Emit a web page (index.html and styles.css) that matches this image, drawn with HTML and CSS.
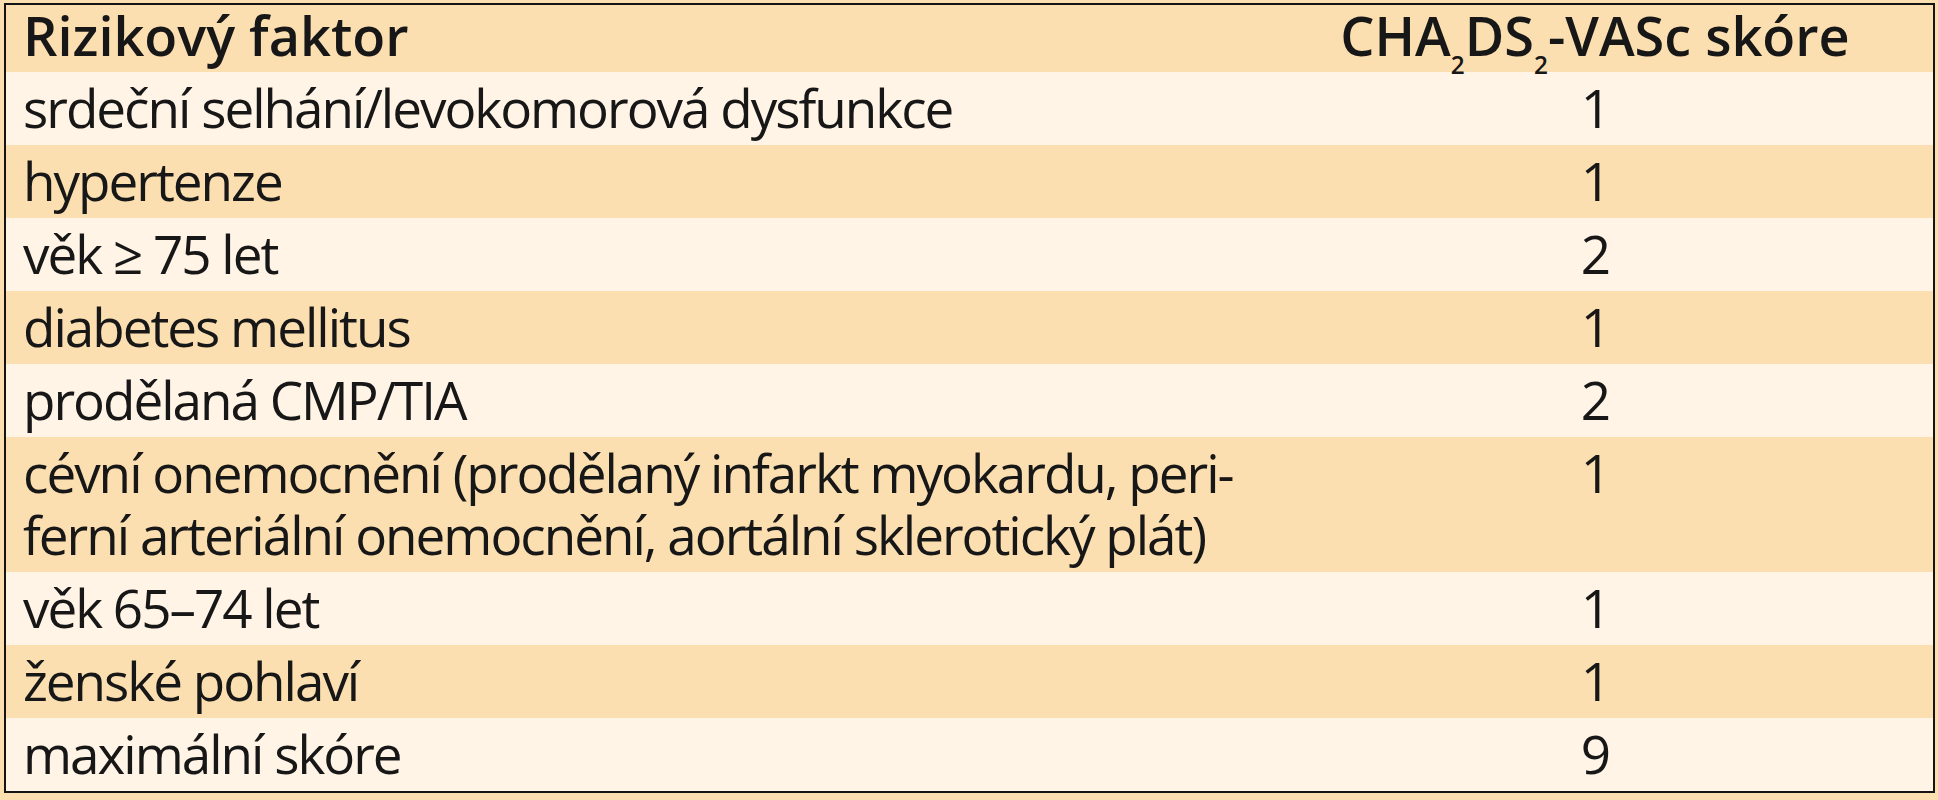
FILE: index.html
```html
<!DOCTYPE html>
<html lang="cs">
<head>
<meta charset="utf-8">
<title>CHA2DS2-VASc skóre</title>
<link rel="stylesheet" href="styles.css">
</head>
<body>
<div class="score">
  <div class="row head tan">
    <div class="factor">Rizikový faktor</div>
    <div class="value">CHA<sub>2</sub>DS<sub>2</sub>-VASc skóre</div>
  </div>
  <div class="row light"><div class="factor">srdeční selhání/levokomorová dysfunkce</div><div class="value">1</div></div>
  <div class="row tan"><div class="factor">hypertenze</div><div class="value">1</div></div>
  <div class="row light"><div class="factor">věk ≥ 75 let</div><div class="value">2</div></div>
  <div class="row tan"><div class="factor">diabetes mellitus</div><div class="value">1</div></div>
  <div class="row light"><div class="factor">prodělaná CMP/TIA</div><div class="value">2</div></div>
  <div class="row tan"><div class="factor">cévní onemocnění (prodělaný infarkt myokardu, peri-<br>ferní arteriální onemocnění, aortální sklerotický plát)</div><div class="value">1</div></div>
  <div class="row light"><div class="factor">věk 65–74 let</div><div class="value">1</div></div>
  <div class="row tan"><div class="factor">ženské pohlaví</div><div class="value">1</div></div>
  <div class="row light"><div class="factor">maximální skóre</div><div class="value">9</div></div>
</div>
</body>
</html>
```

FILE: styles.css
```css
html, body {
  margin: 0;
  padding: 0;
  background: #fbdfb1;
}
body {
  font-family: "Open Sans", "Noto Sans", "DejaVu Sans", sans-serif;
  color: #171717;
}
.score {
  margin: 3px 3px 0 4px;
  border: 2px solid #141414;
  background: #fff4e6;
}
.row {
  display: grid;
  grid-template-columns: 1251px 1fr;
  font-size: 53px;
  letter-spacing: -2px;
  line-height: 62px;
  padding: 5px 0 6px 0;
  white-space: nowrap;
}
.row.head {
  font-size: 54px;
  font-weight: 600;
  letter-spacing: 0;
  line-height: 60px;
  padding: 0 0 7px 0;
}
.tan { background: #fbdfb1; }
.light { background: #fff4e6; }
.factor {
  padding-left: 17px;
}
.value {
  text-align: center;
}
.head sub {
  font-size: 45%;
  line-height: 0;
  vertical-align: -18px;
}
```
